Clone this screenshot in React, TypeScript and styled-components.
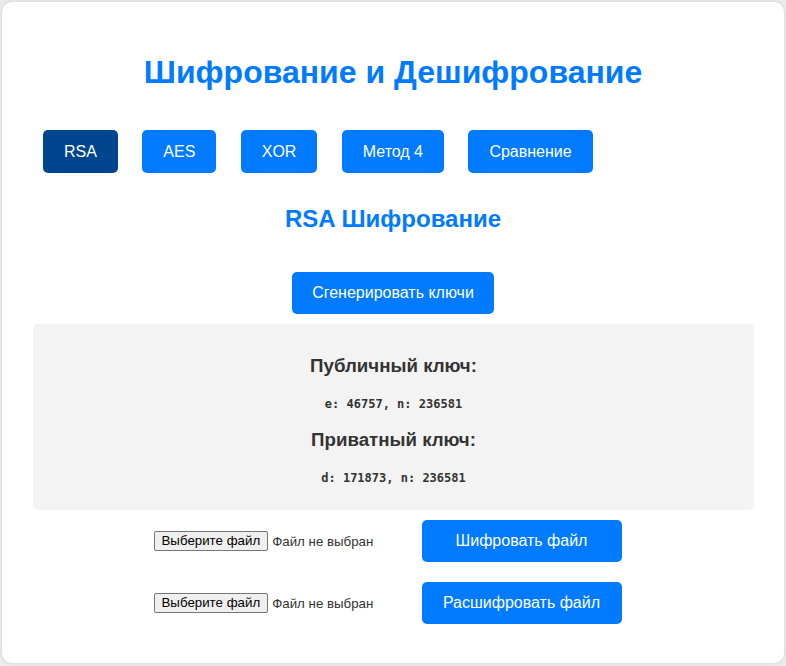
import React from "react";
import styled, { createGlobalStyle } from "styled-components";

const Global = createGlobalStyle`
  html, body { margin: 0; padding: 0; }
  body {
    background: #ececec;
    font-family: "Liberation Sans", Arial, sans-serif;
  }
`;

const Page = styled.div`
  padding: 2px;
  min-height: 666px;
  box-sizing: border-box;
`;

const Card = styled.div`
  background: #fff;
  border-radius: 10px;
  box-shadow: 0 0 4px rgba(0, 0, 0, 0.12);
  padding: 30px 30px 39px;
  display: flex;
  flex-direction: column;
  min-height: 661px;
  box-sizing: border-box;
`;

const Title = styled.h1`
  margin: 22px 0 0;
  font-size: 32px;
  line-height: 37px;
  font-weight: bold;
  color: #007bff;
  text-align: center;
`;

const Tabs = styled.div`
  display: flex;
  gap: 24.4px;
  margin: 39px 0 0 11px;
`;

const Button = styled.button<{ $active?: boolean }>`
  font-family: "Liberation Sans", Arial, sans-serif;
  font-size: 16px;
  line-height: 18px;
  color: #fff;
  background: ${(p) => (p.$active ? "#00468e" : "#007bff")};
  border: none;
  border-radius: 5px;
  padding: 12px 21px;
  height: ${(p) => (p.$active !== undefined ? "43px" : "42px")};
  cursor: pointer;
`;

const GenerateButton = styled(Button)`
  padding: 12px 20px;
`;

const Subtitle = styled.h2`
  margin: 32px 0 0;
  font-size: 24px;
  line-height: 28px;
  font-weight: bold;
  color: #007bff;
  text-align: center;
`;

const Center = styled.div`
  display: flex;
  justify-content: center;
  margin-top: 39px;
`;

const KeyBox = styled.div`
  background: #f3f3f3;
  border-radius: 5px;
  margin: 10px 0 0 1px;
  height: 186px;
  display: flex;
  flex-direction: column;
  align-items: center;
  padding-top: 31px;
  box-sizing: border-box;
`;

const KeyTitle = styled.h3`
  margin: 0;
  font-size: 18.7px;
  line-height: 22px;
  font-weight: bold;
  color: #333;
`;

const KeyValue = styled.p`
  margin: 20px 0 18px;
  font-family: "DejaVu Sans Mono", "Liberation Mono", monospace;
  font-size: 12px;
  line-height: 14px;
  font-weight: bold;
  color: #333;
`;

const Rows = styled.div`
  display: flex;
  flex-direction: column;
  gap: 20px;
  margin-top: 10px;
`;

const Row = styled.div`
  display: flex;
  justify-content: center;
  align-items: center;
  padding-right: 11px;
`;

const FileGroup = styled.div`
  width: 248px;
  display: flex;
  align-items: center;
  gap: 4px;
  margin-right: 20px;
`;

const FileButton = styled.span`
  display: inline-block;
  font-family: "Liberation Sans", Arial, sans-serif;
  font-size: 13.3px;
  line-height: 16px;
  color: #000;
  background: #efefef;
  border: 1px solid #767676;
  border-radius: 2px;
  padding: 1px 7px 1px 7px;
`;

const FileLabel = styled.span`
  font-size: 13.3px;
  color: #333;
`;

const ActionButton = styled(Button)`
  width: 200px;
`;

export default function App() {
  const tabs = ["RSA", "AES", "XOR", "Метод 4", "Сравнение"];
  return (
    <>
      <Global />
      <Page>
        <Card>
          <Title>Шифрование и Дешифрование</Title>
          <Tabs>
            {tabs.map((t, i) => (
              <Button key={t} $active={i === 0}>
                {t}
              </Button>
            ))}
          </Tabs>
          <Subtitle>RSA Шифрование</Subtitle>
          <Center>
            <GenerateButton>Сгенерировать ключи</GenerateButton>
          </Center>
          <KeyBox>
            <KeyTitle>Публичный ключ:</KeyTitle>
            <KeyValue>e: 46757, n: 236581</KeyValue>
            <KeyTitle>Приватный ключ:</KeyTitle>
            <KeyValue>d: 171873, n: 236581</KeyValue>
          </KeyBox>
          <Rows>
            <Row>
              <FileGroup>
                <FileButton>Выберите файл</FileButton>
                <FileLabel>Файл не выбран</FileLabel>
              </FileGroup>
              <ActionButton>Шифровать файл</ActionButton>
            </Row>
            <Row>
              <FileGroup>
                <FileButton>Выберите файл</FileButton>
                <FileLabel>Файл не выбран</FileLabel>
              </FileGroup>
              <ActionButton>Расшифровать файл</ActionButton>
            </Row>
          </Rows>
        </Card>
      </Page>
    </>
  );
}
